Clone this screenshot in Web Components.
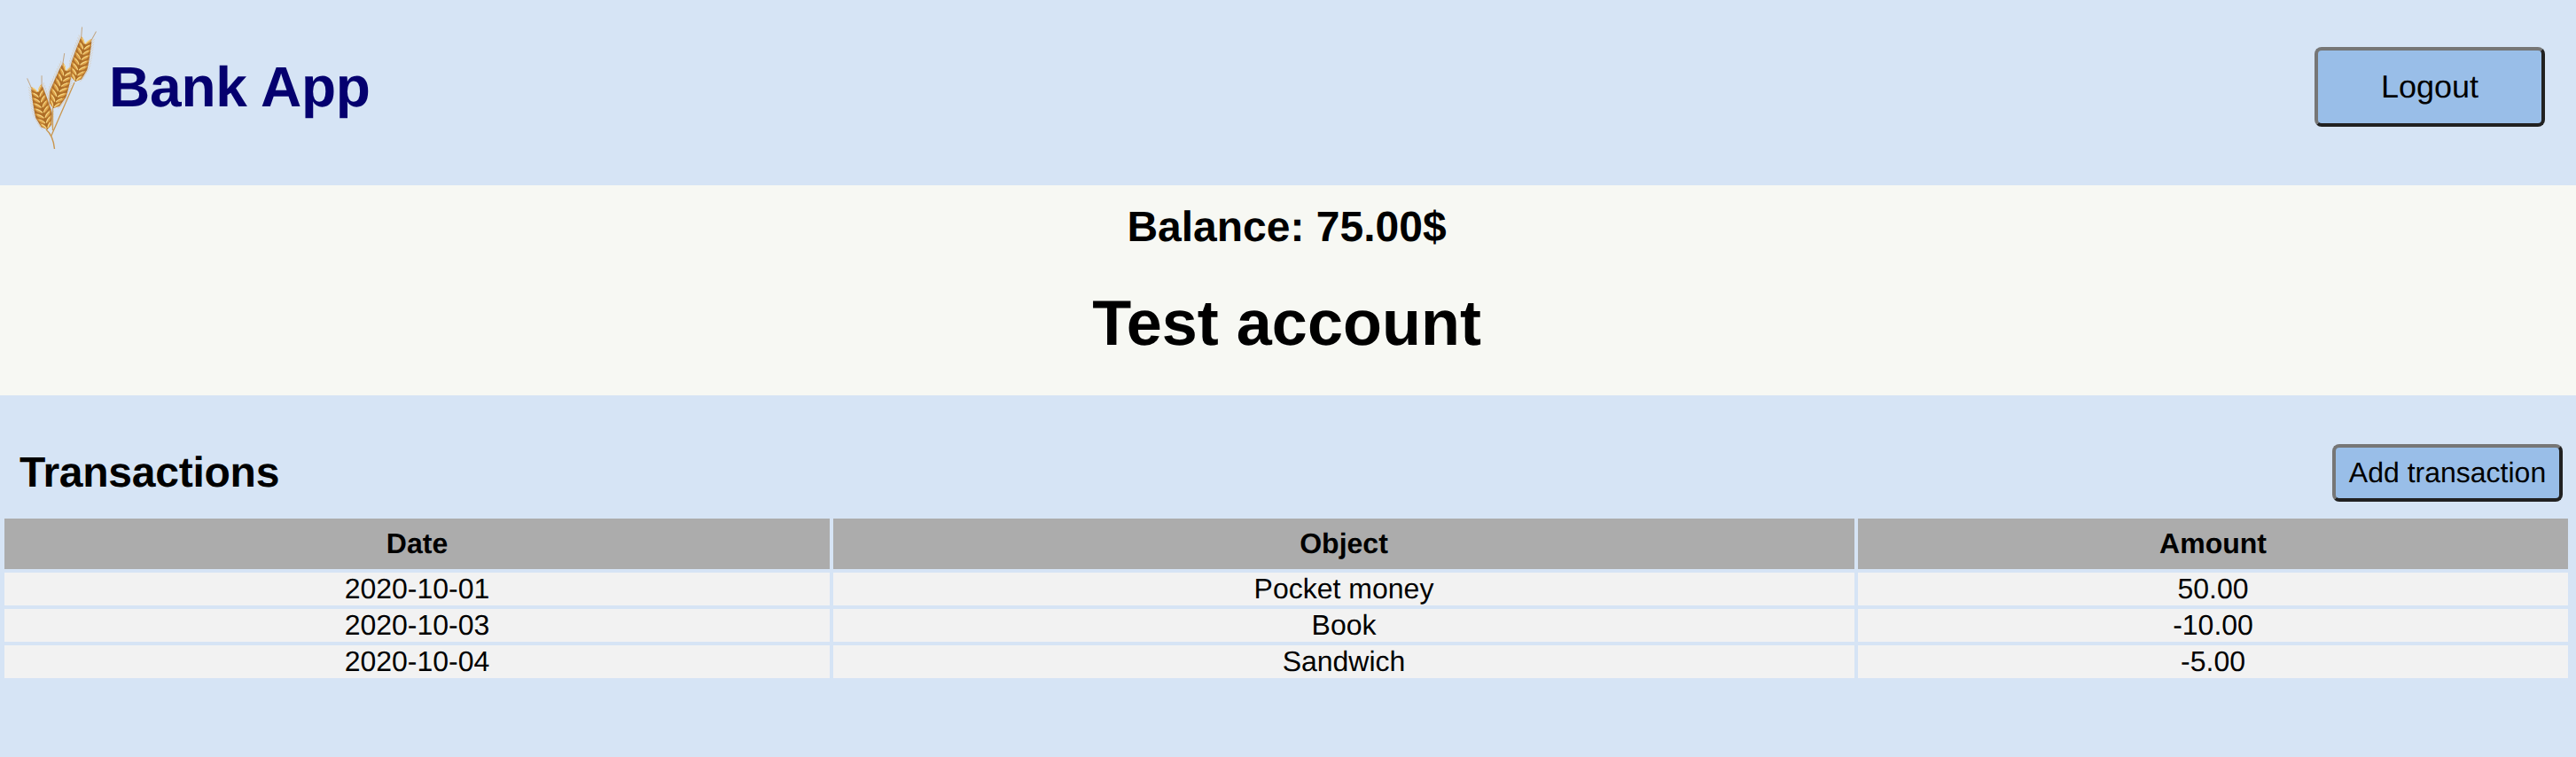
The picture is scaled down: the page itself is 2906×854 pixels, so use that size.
<!DOCTYPE html>
<html lang="en"><head><meta charset="utf-8"><title>Bank App</title>
<style>
html,body{margin:0;padding:0;height:100%;background:#d6e4f5;font-family:"Liberation Sans",Arial,sans-serif;color:#000;text-rendering:geometricPrecision}
bank-page{display:block}
</style></head><body>
<bank-page>
  <app-header>
    <wheat-logo></wheat-logo>
    <span slot="title">Bank App</span>
    <app-button slot="action" size="large">Logout</app-button>
  </app-header>
  <balance-panel balance="75.00$" name="Test account"></balance-panel>
  <tx-section>
    <span slot="title">Transactions</span>
    <app-button slot="action">Add transaction</app-button>
    <tx-table slot="table"></tx-table>
  </tx-section>
</bank-page>
<script>
function shadow(el, html){ el.attachShadow({mode:'open'}).innerHTML = html; }
customElements.define('bank-page', class extends HTMLElement{
  constructor(){super();shadow(this,`<style>:host{display:block}</style><slot></slot>`);}
});
customElements.define('app-header', class extends HTMLElement{
  constructor(){super();shadow(this,`<style>
  :host{display:flex;align-items:center;height:209px;box-sizing:border-box;padding:0 35px 14px 30px}
  .t{font-size:64px;font-weight:700;color:#05006f;margin:0 auto 0 0;line-height:74px;letter-spacing:-.2px}
  </style><slot></slot><h1 class="t"><slot name="title"></slot></h1><slot name="action"></slot>`);}
});
customElements.define('wheat-logo', class extends HTMLElement{
  constructor(){super();
    const ear=(x0,y0,x1,y1,w,n)=>{
      const a=Math.atan2(y1-y0,x1-x0),L=Math.hypot(x1-x0,y1-y0),deg=a*180/Math.PI;
      const prof=t=>w*.46*Math.min(1,.45+1.6*t)*(1-.35*t*t);
      let s=`<g transform="translate(${x0} ${y0}) rotate(${deg})">`;
      let hairs='';
      for(let i=1;i<=n*2;i++){
        const t=i/(n*2),x=t*L,h=prof(t);
        for(const d of[-1,1]) hairs+=`M${x-2} ${d*h*.9}L${x+3.500} ${d*(h+2.600)}`;
      }
      s+=`<path d="${hairs}" stroke="#d8ab6d" stroke-width=".6" opacity=".55" fill="none"/>`;
      s+=`<path d="M${L-1} -${w*.25}L${L+13} -${w*.36}M${L-1} ${w*.25}L${L+12} ${w*.4}" stroke="#b98a52" stroke-width="1" opacity=".7" fill="none"/>`;
      let body=`M0 0`;
      for(let i=1;i<=12;i++){body+=`L${i/12*L} ${-prof(i/12)}`;}
      body+=`L${L*.9} 0`;
      for(let i=12;i>=1;i--){body+=`L${i/12*L} ${prof(i/12)}`;}
      s+=`<path d="${body}Z" fill="#b0702a"/>`;
      for(let i=0;i<n;i++){
        const t=(i+.1)/n,x=t*L,st=L/n,h=prof(Math.min(1,t+1/n))*.98;
        for(const d of[-1,1]){
          s+=`<path d="M${x} ${d*.3}Q${x+st*.95} ${d*h*.2} ${x+st*1.35} ${d*h}Q${x+st*.35} ${d*h*.85} ${x} ${d*.3}Z" fill="#dda148"/>`;
          s+=`<path d="M${x+st*.12} ${d*.5}Q${x+st*.7} ${d*h*.3} ${x+st*1.05} ${d*h*.72}" fill="none" stroke="#f7dc8c" stroke-width="1"/>`;
        }
      }
      s+=`<path d="M0 0L${L*.9} 0" stroke="#a5661f" stroke-width=".6"/></g>`;
      return s;
    };
    /* viewBox maps to the page area x 20..120, y 25..175 */
    shadow(this,`<style>:host{display:block;width:103px;height:150px;flex:none;margin:5px 0 0 -10px}svg{display:block}</style>
    <svg width="100" height="150" viewBox="0 0 100 150" role="img" aria-label="Wheat logo">
      <defs><filter id="soft" x="-10%" y="-10%" width="120%" height="120%"><feGaussianBlur stdDeviation=".3"/></filter></defs>
      <g filter="url(#soft)">
      <path d="M32 121Q40 128 41.500 143" fill="none" stroke="#c9964f" stroke-width="1.400"/>
      <path d="M39.500 97L39.500 122" fill="none" stroke="#cb9c55" stroke-width="1.300"/>
      <path d="M64 68L37.500 129" fill="none" stroke="#c9964f" stroke-width="1.300"/>
      ${ear(33.5,121,21.5,74,22,8)}
      ${ear(40,97,56,50,22,8)}
      ${ear(65,67,77,20,22,8)}
      </g>
    </svg>`);}
});
customElements.define('app-button', class extends HTMLElement{
  constructor(){super();const L=this.getAttribute('size')==='large';
    shadow(this,`<style>
    :host{display:block;flex:none}
    button{display:block;box-sizing:border-box;width:260px;height:${L?90:65}px;padding:0;background:#99bee8;color:#000;text-rendering:geometricPrecision;
    font:${L?36:32}px "Liberation Sans",Arial,sans-serif;border:4px solid;border-color:#767676 #212121 #212121 #767676;border-radius:8px}
    </style><button><slot></slot></button>`);}
});
customElements.define('balance-panel', class extends HTMLElement{
  constructor(){super();shadow(this,`<style>
    :host{display:block;background:#f7f8f3;height:237px;box-sizing:border-box;padding:20px 3px 0 0;text-align:center}
    h2{margin:0;font-size:48px;line-height:55px;font-weight:700}
    h1{margin:40px 0 0;font-size:72px;line-height:83px;font-weight:700}
    </style><h2>Balance: ${this.getAttribute('balance')}</h2><h1>${this.getAttribute('name')}</h1>`);}
});
customElements.define('tx-section', class extends HTMLElement{
  constructor(){super();shadow(this,`<style>
    :host{display:block;padding:55px 9px 0 1px}
    .bar{display:flex;justify-content:space-between;align-items:center;padding:0 6px 0 21px;height:65px;margin-bottom:15px}
    h2{margin:0;font-size:48px;line-height:55px;font-weight:700;letter-spacing:-.25px}
    </style><div class="bar"><h2><slot name="title"></slot></h2><slot name="action"></slot></div><slot name="table"></slot>`);}
});
customElements.define('tx-table', class extends HTMLElement{
  constructor(){super();
    const rows=[['2020-10-01','Pocket money','50.00'],['2020-10-03','Book','-10.00'],['2020-10-04','Sandwich','-5.00']];
    shadow(this,`<style>
    :host{display:block}
    table{border-collapse:separate;border-spacing:4px;width:2900px;table-layout:fixed;font-size:32px;margin:0}
    th{background:#acacac;height:57px;padding:0;font-weight:700;text-align:center;box-sizing:border-box}
    td{background:#f2f2f2;height:37px;padding:0;text-align:center;box-sizing:border-box;line-height:37px}
    </style><table><colgroup><col style="width:931px"><col style="width:1152px"><col style="width:801px"></colgroup>
    <thead><tr><th>Date</th><th>Object</th><th>Amount</th></tr></thead>
    <tbody>${rows.map(r=>`<tr>${r.map(c=>`<td>${c}</td>`).join('')}</tr>`).join('')}</tbody></table>`);}
});
</script>
</body></html>
